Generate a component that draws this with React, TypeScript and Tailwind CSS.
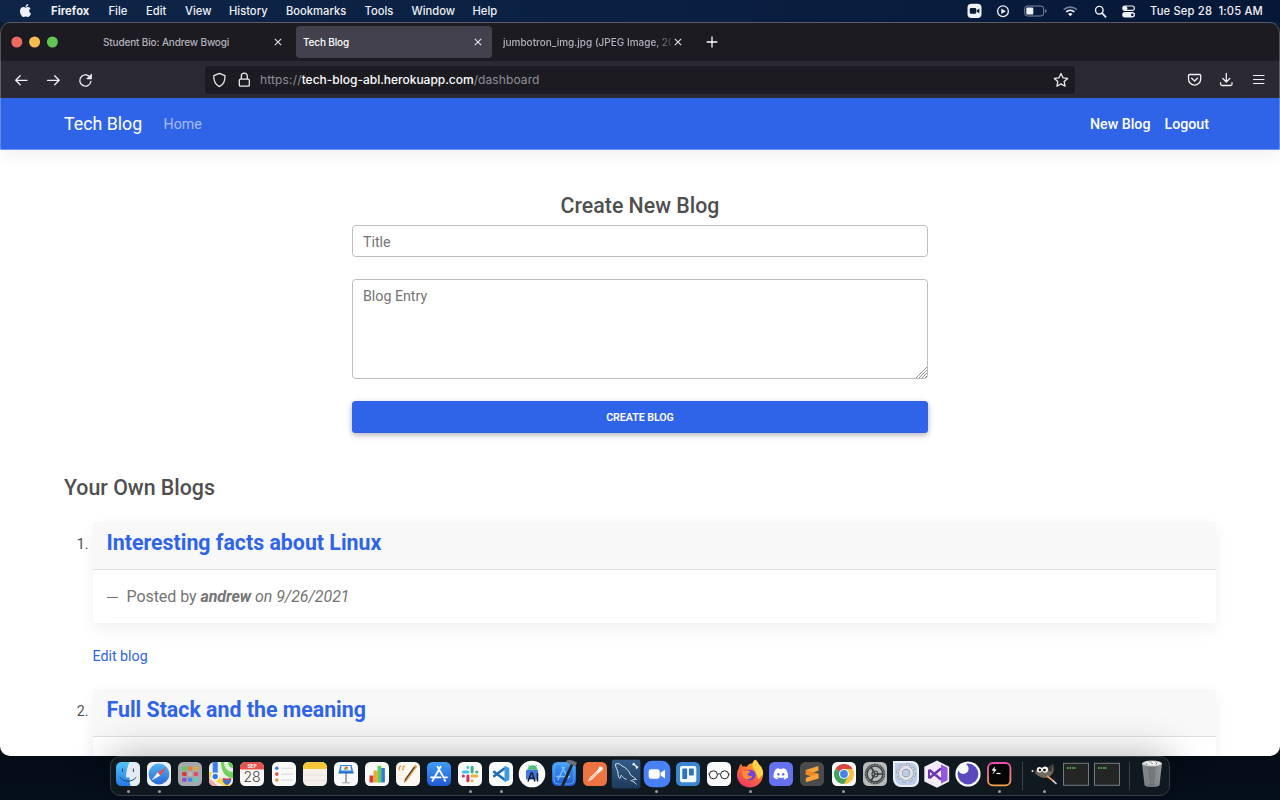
import type { ReactNode } from "react";
import { FaApple, FaDiscord } from "react-icons/fa";

const menuItems = [
  { label: "Firefox", cls: "w-[57.5px] font-bold tracking-[0.08px]" },
  { label: "File", cls: "w-[37.5px] font-medium" },
  { label: "Edit", cls: "w-[39px] font-medium" },
  { label: "View", cls: "w-[44px] font-medium" },
  { label: "History", cls: "w-[57px] font-medium" },
  { label: "Bookmarks", cls: "w-[78.5px] font-medium" },
  { label: "Tools", cls: "w-[47px] font-medium" },
  { label: "Window", cls: "w-[61px] font-medium" },
  { label: "Help", cls: "w-[40px] font-medium" },
];

function MenuBar() {
  return (
    <div className="flex h-[22px] shrink-0 items-center pb-px pl-[18px] text-[11.2px] leading-[20px] whitespace-nowrap text-[#eef1f5]">
      <FaApple className="-mt-px mr-[18px] h-[15px] w-[15px]" />
      {menuItems.map((m) => (
        <span key={m.label} className={m.cls}>{m.label}</span>
      ))}
      <svg className="ml-auto h-[16px] w-[190px] shrink-0" viewBox="0 0 190 16" fill="none" stroke="#eef1f5">
        <rect x="7.5" y=".8" width="14" height="14.2" rx="4" fill="#eef1f5" stroke="none" />
        <rect x="9.8" y="5" width="6.4" height="5.8" rx="1.2" fill="#0a1c3c" stroke="none" />
        <path d="M16.6 7.4l2.7-1.9v4.8l-2.7-1.9z" fill="#0a1c3c" stroke="none" />
        <circle cx="43" cy="8.2" r="5.4" strokeWidth="1.3" />
        <path d="M41.3 5.5v5.4l4.5-2.7z" fill="#eef1f5" stroke="none" />
        <rect x="64.7" y="3" width="19" height="10" rx="2.8" stroke="#7f8b9f" strokeWidth="1" />
        <rect x="66.3" y="4.6" width="7" height="6.8" rx="1" fill="#eef1f5" stroke="none" />
        <path d="M85.3 6.2c1.8.7 1.8 3 0 3.6z" fill="#8b96a8" stroke="none" />
        <path d="M103.7 6.6a10 10 0 0 1 13.2 0" stroke="#71809a" strokeWidth="1.7" />
        <path d="M106.2 8.9a6.3 6.3 0 0 1 8.2 0" strokeWidth="1.7" />
        <path d="M110.3 13.3l-2.2-2.4a3.4 3.4 0 0 1 4.4 0z" fill="#eef1f5" stroke="none" />
        <circle cx="139.3" cy="7.2" r="3.8" strokeWidth="1.4" />
        <path d="M142.1 10.1l3.5 3.7" strokeWidth="1.7" strokeLinecap="round" />
        <rect x="162.8" y="3" width="11.6" height="4.4" rx="2.2" strokeWidth="1.1" />
        <circle cx="165.1" cy="5.2" r="2.3" fill="#eef1f5" stroke="none" />
        <rect x="162.2" y="9.1" width="12.8" height="5.4" rx="2.7" fill="#eef1f5" stroke="none" />
        <circle cx="172.3" cy="11.8" r="1.4" fill="#0a1c3c" stroke="none" />
      </svg>
      <span className="w-[130px] font-medium tracking-[0.17px] whitespace-pre">Tue Sep 28  1:05 AM</span>
    </div>
  );
}

function Cross() {
  return (
    <svg className="h-[8px] w-[8px] shrink-0" viewBox="0 0 8 8" fill="none" stroke="#e2e2e6" strokeWidth="1.1">
      <path d="M.8 .8l6.4 6.4M7.2 .8L.8 7.2" />
    </svg>
  );
}

function TabBar() {
  return (
    <div className="flex h-[38px] shrink-0 items-center bg-[#1c1b22] text-[10px] leading-[32px] font-medium whitespace-nowrap">
      <svg className="h-[12px] w-[62px] shrink-0" viewBox="0 0 62 12">
        <circle cx="16.8" cy="6" r="5.5" fill="#ed6a5e" />
        <circle cx="34.6" cy="6" r="5.5" fill="#f5bf4f" />
        <circle cx="52.4" cy="6" r="5.5" fill="#61c554" />
      </svg>
      <div className="flex h-[32px] w-[234px] items-center pl-[41px] text-[#b3b2b9]">
        <span className="w-[171px] tracking-[-0.15px]">Student Bio: Andrew Bwogi</span>
        <Cross />
      </div>
      <div className="flex h-[32px] w-[196px] items-center rounded-[4px] bg-[#42414d] pl-[7px] text-white">
        <span className="w-[171px] tracking-[-0.15px]">Tech Blog</span>
        <Cross />
      </div>
      <div className="flex h-[32px] w-[200px] items-center pl-[11px] text-[#b3b2b9]">
        <span className="w-[168px] overflow-hidden [mask-image:linear-gradient(to_right,black_150px,transparent_174px)]">
          jumbotron_img.jpg (JPEG Image, 2048
        </span>
        <span className="ml-[3px] flex"><Cross /></span>
      </div>
      <svg className="ml-[14px] h-[12px] w-[12px]" viewBox="0 0 12 12" stroke="#fbfbfe" strokeWidth="1.3">
        <path d="M6 .6v10.8M.6 6h10.8" />
      </svg>
    </div>
  );
}

function Toolbar() {
  return (
    <div className="flex h-[37px] shrink-0 items-center bg-[#2b2a33]">
      <svg className="h-[20px] w-[205px] shrink-0" viewBox="0 0 205 20" fill="none" stroke="#f0f0f4" strokeWidth="1.3" strokeLinecap="round" strokeLinejoin="round">
        <path d="M27 10.3H15.8M20.200 5.800l-4.500 4.500 4.500 4.500" />
        <path d="M47.500 10.300h11.500M54.700 5.800l4.500 4.500-4.500 4.500" />
        <path d="M90.400 8A5.600 5.600 0 1 0 90.900 11.500M91.200 4.500v4h-4" />
        <path d="M91.200 5v3.500h-3.500z" fill="#f0f0f4" strokeWidth=".6" />
      </svg>
      <div className="flex h-[28px] w-[870px] items-center rounded-[4px] bg-[#1c1b22] text-[12px] whitespace-nowrap text-[#8f8f98]">
        <svg className="h-[18px] w-[55px] shrink-0" viewBox="0 0 55 18" fill="none" stroke="#e9e9ed" strokeWidth="1.300" strokeLinejoin="round">
          <path d="M14.400 2.400l5.600 2.200c.300 5.600-1.300 8.900-5.600 11-4.300-2.100-5.900-5.400-5.600-11z" />
          <rect x="34.300" y="8.200" width="10" height="7" rx="1.200" />
          <path d="M36.300 8V5.200a3 3 0 0 1 6 0V8" />
        </svg>
        <span className="tracking-[0.15px]">https://</span>
        <span className="font-medium tracking-[-0.010px] text-[#fbfbfe]">tech-blog-abl.herokuapp.com</span>
        <span className="tracking-[0.1px]">/dashboard</span>
        <svg className="mr-[6.500px] ml-auto h-[16px] w-[16px]" viewBox="0 0 16 16" fill="none" stroke="#e9e9ed" strokeWidth="1.300" strokeLinejoin="round">
          <path d="M8 1.500l2 4.300 4.700.600-3.500 3.200.900 4.600L8 11.900l-4.100 2.300.900-4.600L1.300 6.400 6 5.800z" />
        </svg>
      </div>
      <svg className="ml-auto h-[20px] w-[96px]" viewBox="0 0 96 20" fill="none" stroke="#f0f0f4" strokeWidth="1.300" strokeLinecap="round" strokeLinejoin="round">
        <path d="M5.500 4.500h10.200c.600 0 1 .400 1 1V9a6.100 6.100 0 0 1-12.200 0V5.500c0-.600.400-1 1-1zM7.700 8.200l2.900 2.800 2.900-2.800" />
        <path d="M42.300 3.500v8.400M38.800 8.500l3.500 3.500 3.500-3.500M36.600 12.700V14c0 .900.600 1.500 1.500 1.500h8.400c.900 0 1.500-.600 1.500-1.500v-1.300" />
        <path d="M69.500 5.500H80M69.500 9.500H80M69.500 13.500H80" strokeWidth="1.200" />
      </svg>
    </div>
  );
}

function BlogItem({ index, title, first }: { index: number; title: string; first?: boolean }) {
  return (
    <li className="flex">
      <span className="w-[28.500px] pt-[13px] pr-[4px] text-right text-[14.220px] leading-[18px]">{index}.</span>
      <div className="flex-1">
        <article className="rounded-[3.500px] bg-white shadow-[0_9px_18px_rgba(0,0,0,0.040),0_2px_14px_rgba(0,0,0,0.030)]">
          <h4 className="h-[48px] border-b border-[#dfdfdf] bg-[#f8f8f8] pl-[14px] text-[21.330px] leading-[41px] font-bold text-[#2f64e9]">{title}</h4>
          <p className="flex h-[53px] items-center pt-px pl-[14px] text-[16px] text-[#757575]">
            <span className="w-[20px]"><span className="inline-block w-[11px] border-t border-[#757575] align-middle" /></span>
            <span className="tracking-[-0.060px]">Posted by <i><b>andrew</b> on 9/26/2021</i></span>
          </p>
        </article>
        {first && <a className="mt-[24px] mb-[23px] block h-[18.500px] text-[14.220px] leading-[18px] text-[#2f64e9]">Edit blog</a>}
      </div>
    </li>
  );
}

function Page() {
  return (
    <div className="flex min-h-0 flex-1 flex-col overflow-hidden bg-white font-['Roboto',sans-serif] text-[#4f4f4f]">
      <nav className="flex h-[52px] shrink-0 items-center border-b border-[#6d93f2] bg-[#2f64e9] px-[64px] pt-[2px] text-[14.220px] text-white shadow-[0_3px_18px_rgba(0,0,0,0.080)]">
        <span className="w-[99.500px] text-[17.780px]">Tech Blog</span>
        <span className="text-white/55">Home</span>
        <span className="mr-[14px] ml-auto font-medium">New Blog</span>
        <span className="mr-[7px] font-medium">Logout</span>
      </nav>
      <form className="mx-auto mt-[43px] flex w-[576px] shrink-0 flex-col text-[14.220px]">
        <h4 className="mb-[6px] text-center text-[21.330px] leading-[26px] font-medium">Create New Blog</h4>
        <input placeholder="Title" className="h-[32px] rounded-[3.500px] border border-[#bdbdbd] px-[10px] pt-[2px] placeholder:text-[#757575]" />
        <div className="relative mt-[22px] h-[100px]">
          <textarea placeholder="Blog Entry" className="block h-full w-full resize-none rounded-[3.500px] border border-[#bdbdbd] px-[10px] py-[5px] leading-[22.700px] placeholder:text-[#757575]" />
          <svg className="absolute right-px bottom-px h-[11px] w-[11px]" viewBox="0 0 11 11" stroke="#777" strokeWidth=".8">
            <path d="M0 11L11 0M3 11l8-8M6 11l5-5M9 11l2-2" />
          </svg>
        </div>
        <button type="button" className="mt-[22px] h-[32px] rounded-[3.500px] bg-[#2f64e9] pt-[2px] text-[10.670px] font-semibold tracking-[-0.050px] text-white shadow-[0_2px_5px_rgba(0,0,0,0.200),0_2px_9px_rgba(0,0,0,0.120)]">
          CREATE BLOG
        </button>
      </form>
      <section className="mt-[42px] shrink-0 px-[64px]">
        <h4 className="mb-[21px] text-[21.330px] leading-[26px] font-medium">Your Own Blogs</h4>
        <ol>
          <BlogItem index={1} title="Interesting facts about Linux" first />
          <BlogItem index={2} title="Full Stack and the meaning" />
        </ol>
      </section>
    </div>
  );
}

function Tile({ fill, children }: { fill: string; children?: ReactNode }) {
  return (
    <>
      <rect x="0" y="0" width="24" height="24" rx="5.300" fill={fill} />
      {children}
    </>
  );
}

type DockApp = { name: string; running?: boolean; art: ReactNode };

const apps: DockApp[] = [
  {
    name: "finder",
    running: true,
    art: (
      <Tile fill="url(#finder)">
        <path d="M13.500 0h5.200A5.300 5.300 0 0 1 24 5.300v13.400a5.300 5.300 0 0 1-5.300 5.300h-4.200c-.700-2.500-.900-5-.900-8.500H9.900C10.300 9.300 11.500 4 13.500 0z" fill="#e6ebf2" />
        <path d="M6.600 7v2.600M17.400 7v2.600M4 15.500c4 5 12 5 16 0" fill="none" stroke="#23405f" strokeWidth="1" strokeLinecap="round" />
      </Tile>
    ),
  },
  {
    name: "safari",
    running: true,
    art: (
      <Tile fill="#eeeeef">
        <circle cx="12" cy="12" r="10.400" fill="url(#safari)" />
        <path d="M19.500 5.500l-6.200 7.900-2.700-2.800z" fill="#e8503f" />
        <path d="M4.500 18.500l6.100-7.900 2.700 2.800z" fill="#f4f4f4" />
      </Tile>
    ),
  },
  {
    name: "launchpad",
    art: (
      <Tile fill="#a5a8ad">
        {["#59d14d", "#f07a3a", "#e8a33c", "#d93831", "#b6b8be", "#e24a68", "#9a47cc", "#3b8de8", "#6bcab8"].map((c, i) => (
          <rect key={c} x={4.200 + (i % 3) * 5.700} y={4.400 + Math.floor(i / 3) * 5.700} width="4.400" height="4" rx="1.100" fill={c} />
        ))}
      </Tile>
    ),
  },
  {
    name: "maps",
    art: (
      <g clipPath="url(#squircle)">
        <rect width="24" height="24" fill="#f2efe5" />
        <path d="M12 0h12v16C16 16 12 9 12 0z" fill="#72d15e" />
        <path d="M15 0h9v10c-5 0-9-4-9-10z" fill="#e9ede2" />
        <path d="M19 0h5v6c-3 0-5-3-5-6z" fill="#64c955" />
        <path d="M0 9l24 15H15L0 15z" fill="#f8d74e" />
        <path d="M0 16l9 8H0z" fill="#f0a8b0" />
        <rect x="3.700" y="0" width="5" height="15" fill="#3980ee" />
        <circle cx="6.200" cy="14.500" r="4" fill="#fff" />
        <circle cx="6.200" cy="14.500" r="2.700" fill="#2f7bea" />
        <path d="M14 16c2.500 1 5.500 1 8 0 1 3-.500 5.500-4 7-3.500-1.500-5-4-4-7z" fill="#4372c8" />
        <path d="M14 16c2.500 1 5.500 1 8 0l.2 2h-8.400z" fill="#dc4444" />
      </g>
    ),
  },
  {
    name: "calendar",
    art: (
      <Tile fill="#f8f7f6">
        <path d="M0 7.600V5.300A5.300 5.300 0 0 1 5.300 0h13.400A5.300 5.300 0 0 1 24 5.300v2.300z" fill="#e5544c" />
        <text x="12" y="6" textAnchor="middle" fontSize="4.800" fontWeight="700" fill="#fff">SEP</text>
        <text x="12" y="20.400" textAnchor="middle" fontSize="14" fontWeight="300" fill="#3c3c3c">28</text>
      </Tile>
    ),
  },
  {
    name: "reminders",
    art: (
      <Tile fill="#fafafa">
        {["#3d78e6", "#de4d48", "#e09243"].map((c, i) => (
          <g key={c}>
            <circle cx="4.800" cy={6.200 + i * 5.900} r="1.800" fill={c} />
            <path d={i === 0 ? "M9 6.200h12" : i === 1 ? "M9 12.100h12" : "M9 18h12"} stroke="#c9c9c9" strokeWidth=".7" />
          </g>
        ))}
      </Tile>
    ),
  },
  {
    name: "notes",
    art: (
      <Tile fill="#f3f1ea">
        <path d="M0 7V5.300A5.300 5.300 0 0 1 5.300 0h13.400A5.300 5.300 0 0 1 24 5.300V7z" fill="#f6c737" />
        <path d="M1 13h22M1 18.500h22" stroke="#dddbd3" strokeWidth=".6" />
      </Tile>
    ),
  },
  {
    name: "keynote",
    art: (
      <Tile fill="#f8f9fb">
        <path d="M11.300 11h1.400v9.500h-1.400z" fill="#7d828c" />
        <path d="M8 20.300h8v1H8z" fill="#9ba0a8" />
        <path d="M6.400 3h11.200L19.500 11h-15z" fill="#3686e4" />
        <path d="M7.500 4h9l.7 4.500H6.800z" fill="#e6f1fb" />
        <circle cx="12" cy="6.300" r="1.800" fill="#e8a03c" />
        <path d="M12 4.500a1.800 1.800 0 0 1 1.800 1.800H12z" fill="#de4c43" />
        <path d="M12 8.100a1.800 1.800 0 0 1-1.800-1.800H12z" fill="#47b05c" />
        <path d="M4.500 10.200h15v1.300h-15z" fill="#2366b8" />
      </Tile>
    ),
  },
  {
    name: "numbers",
    art: (
      <Tile fill="#f8faf7">
        <rect x="4.500" y="13.500" width="4" height="7" fill="#d93a33" />
        <rect x="8.500" y="8.500" width="4" height="12" fill="#f0a735" />
        <rect x="12.500" y="3.800" width="3.700" height="16.700" fill="#5fce58" />
        <rect x="16.200" y="6" width="3.700" height="14.500" fill="#3378dc" />
      </Tile>
    ),
  },
  {
    name: "pages",
    art: (
      <Tile fill="#fbf8f2">
        <path d="M3 9.300l6 0M3 13h8M3 16.500h6" stroke="#e6dfd3" strokeWidth=".5" />
        <path d="M3.200 8.300V5.800c0-1 .8-1.600 2-1.800M7 8.300V5.800c0-1 .8-1.600 2-1.800" fill="none" stroke="#efa04f" strokeWidth="1.500" />
        <path d="M8 21l1-4L19.300 2.800l2 1.500L11 18.500z" fill="#e5953a" />
        <path d="M8 21l1-4 9-12.500 1 .7L9.600 18.200z" fill="#46413c" />
      </Tile>
    ),
  },
  {
    name: "app-store",
    art: (
      <Tile fill="url(#store)">
        <path d="M13.600 4.800L6.400 17.200M10.500 4.800l6.200 10.700M4 15.300h9.600M17 15.300h3M17.300 17.500l.9 1.500M5.800 18.300l-.4.700" stroke="#fff" strokeWidth="1.800" strokeLinecap="round" />
      </Tile>
    ),
  },
  {
    name: "slack",
    running: true,
    art: (
      <Tile fill="#fbfbfb">
        <g strokeWidth="3" strokeLinecap="round">
          <path d="M9.900 5.300v.1M5.300 9.900h4.600" stroke="#4ec0e8" />
          <path d="M14.100 5.300v4.600M18.700 9.900h.1" stroke="#3fb17e" />
          <path d="M14.100 14.100h4.600M14.100 18.700v.1" stroke="#e5b13c" />
          <path d="M9.900 14.100v4.600M5.300 14.100h.1" stroke="#d42f5f" />
        </g>
      </Tile>
    ),
  },
  {
    name: "vscode",
    running: true,
    art: (
      <Tile fill="#fbfbfb">
        <path d="M4.300 9.300L16 18M4.300 14.700L16 6" stroke="#1d6fb4" strokeWidth="2.600" strokeLinejoin="round" />
        <path d="M15.500 3.800L20.300 6v12l-4.800 2.200z" fill="#3c9ae4" />
      </Tile>
    ),
  },
  {
    name: "android-studio",
    art: (
      <>
        <circle cx="12" cy="12" r="13.300" fill="#fbfbfb" />
        <path d="M7.500 7.700a5 4.500 0 0 1 10 0z" fill="#4cc276" />
        <path d="M9.500 4.500L8.400 3M15.500 4.500L16.600 3" stroke="#4cc276" />
        <rect x="6" y="7.700" width="12" height="9.800" rx="1" fill="#4278da" />
        <path d="M8 19.500l3.200-8.500h1L15 19.500M9.500 16.200h4.300M17.500 11v8.500" fill="none" stroke="#15233d" strokeWidth="1.500" />
      </>
    ),
  },
  {
    name: "xcode",
    art: (
      <Tile fill="url(#store)">
        <rect x="2" y="2" width="20" height="20" rx="4" fill="none" stroke="#74bdf3" strokeWidth=".7" />
        <path d="M12.500 5L6 17.500M10 5l6 11M4.500 14.500h13" stroke="#7fc0f5" strokeWidth="1.500" strokeLinecap="round" />
        <path d="M8.500 24.500L19 1.500l2.500 1L11.500 25z" fill="#20242b" />
        <path d="M14-1c3-2 8-.5 11 1.800l-2 3.800-2.500-1.600c-1.500-1-3-1.500-4.500-1z" fill="#69727c" />
      </Tile>
    ),
  },
  {
    name: "postman",
    art: (
      <Tile fill="#ee7342">
        <path d="M5 19.500l1.300-3.600 7.500-6.800 2 2L9 17.500z" fill="#fde9df" />
        <path d="M13.500 9l3-3 2.300 2.300-3.300 2.900z" fill="#fff4ec" />
        <circle cx="17.700" cy="6.600" r="2.200" fill="#fff2e9" />
        <path d="M7 17l7.500-6.500" stroke="#ee7342" strokeWidth=".6" />
      </Tile>
    ),
  },
  {
    name: "mysql-workbench",
    art: (
      <>
        <rect x="-2.200" y="-2.200" width="28.600" height="28.600" rx="2" fill="url(#mysql)" />
        <path d="M1.500 2c3-1 5 0 6.500 2 4 1.500 7 4.500 8.500 9 2 1.300 3.500 2.500 6 4.500-2 .2-3 0-4.200.6M22.500 22.500c-1.500-2-3.500-3.500-6-4M1.500 2c-.3 3.500 2.400 6 2.500 9 0 2.500.4 4 1.800 5.500 1.100-1 .4-2.600 1.500-3.300 1.500 2 3 3.500 5.200 4.300" fill="none" stroke="#e4edf5" strokeWidth=".9" />
        <path d="M19 1.500l4.500 4M18.500 3l2-2M22 6.500l2-2" stroke="#eef3f7" strokeWidth="1.600" />
      </>
    ),
  },
  {
    name: "zoom",
    running: true,
    art: (
      <>
        <rect x="-1.300" y="-1.300" width="26.600" height="26.600" rx="8.500" fill="#4a80f5" />
        <rect x="3.700" y="7.300" width="11" height="9.500" rx="2.300" fill="#fff" />
        <path d="M15.500 10.700l4.500-3v8.700l-4.500-3z" fill="#fff" />
      </>
    ),
  },
  {
    name: "trello",
    art: (
      <Tile fill="#3b87cf">
        <rect x="4" y="4" width="16.300" height="16.300" rx="2" fill="#f3f6fa" />
        <rect x="6.300" y="6.400" width="4.800" height="10.500" rx=".7" fill="#2d72bd" />
        <rect x="13" y="6.400" width="4.800" height="7" rx=".7" fill="#2d72bd" />
      </Tile>
    ),
  },
  {
    name: "glasses",
    art: (
      <Tile fill="#fcfcfc">
        <g fill="none" stroke="#222" strokeWidth="1">
          <circle cx="6.400" cy="12.800" r="4" />
          <circle cx="17.600" cy="12.800" r="4" />
          <path d="M10.400 12.500c.8-1 2.400-1 3.200 0M1.300 12h1.200M21.500 12h1.200" />
        </g>
      </Tile>
    ),
  },
  {
    name: "firefox",
    running: true,
    art: (
      <>
        <path d="M17-2.300c2.500 1.500 3.200 3 3.500 4.300 3.200 2.200 5 6 4.500 11-.600 7.500-6 12.500-13 12.500S-1 20-1 13.500c0-3.500.5-5 1.800-7C1 4.500 2 2.800 3.500 1.700c0 1.200.3 2 .8 2.700 1.700-.4 3-.3 4.500.4C10.500 1.800 13 1.500 14.500 1.600 14.600 0 15.400-1.400 17-2.300z" fill="url(#fox)" />
        <path d="M17-2.300c2.500 1.500 3.200 3 3.500 4.300 3 2.700 4.800 6.500 4.500 10.200l-4.500 5-3-7.500c-2.300-3.500-3.500-5.700-3-8.100z" fill="#ffd24a" />
        <circle cx="12.300" cy="13" r="5.300" fill="#7344d6" />
        <path d="M4 8.500c3 .8 4.600.4 7.800.5 1 .8-.3 2-2.300 2.400.4 2.500 2.200 3 5 2.300-1.600 4-7 4.500-9.500 1z" fill="#ff8d32" />
      </>
    ),
  },
  {
    name: "discord",
    art: (
      <Tile fill="#6571ee">
        <FaDiscord x="3.800" y="3.800" width="16.500" height="16.500" color="#fff" />
      </Tile>
    ),
  },
  {
    name: "sublime",
    art: (
      <Tile fill="#4b4b4b">
        <path d="M5.800 8l12.600-4v4.800L5.800 12.800z" fill="#f9a33b" />
        <path d="M5.800 8v4.800l12.600 3.600v-4.700z" fill="#ee8a25" />
        <path d="M5.800 15.800l12.600-4v4.600L5.800 20.300z" fill="#fba43a" />
      </Tile>
    ),
  },
  {
    name: "chrome",
    running: true,
    art: (
      <Tile fill="#fafafa">
        <path d="M12 12L3.400 7a9.900 9.900 0 0 1 17.200 0z" fill="#d9483c" />
        <path d="M12 12V7h8.600A9.900 9.900 0 0 1 11.600 22z" fill="#f6c445" />
        <path d="M3.400 7A9.900 9.900 0 0 0 11.800 22l4.400-7.600L12 12z" fill="#42a35b" />
        <circle cx="12" cy="12" r="5" fill="#fff" />
        <circle cx="12" cy="12" r="3.900" fill="#4584ee" />
      </Tile>
    ),
  },
  {
    name: "system-preferences",
    art: (
      <Tile fill="#b6bab9">
        <g fill="none" stroke="#3c3f42">
          <circle cx="12" cy="12" r="9.500" strokeWidth="1.500" strokeDasharray="1.200 .4" />
          <circle cx="12" cy="12" r="7.900" strokeWidth="1.500" />
          <circle cx="12" cy="12" r="3" strokeWidth="1.200" />
          <path d="M12 12h8M12 12L8 19M12 12L8 5" strokeWidth="1.600" />
        </g>
      </Tile>
    ),
  },
  {
    name: "automation",
    art: (
      <>
        <path d="M-1-1h19a7 7 0 0 1 7 7v12a7 7 0 0 1-7 7H7a8 8 0 0 1-8-8z" fill="#e9eef6" />
        <path d="M1 1h16a6 6 0 0 1 6 6v10a6 6 0 0 1-6 6H8a7 7 0 0 1-7-7z" fill="#bccce6" />
        <circle cx="12" cy="11" r="8" fill="none" stroke="#858b95" strokeWidth="3.400" strokeDasharray="3.100 3.183" />
        <circle cx="12" cy="11" r="8" fill="none" stroke="#d7dae0" strokeWidth="2.400" strokeDasharray="2.500 3.783" strokeDashoffset="-.3" />
        <circle cx="12" cy="11" r="5.600" fill="none" stroke="#858b95" strokeWidth="4" />
        <circle cx="12" cy="11" r="5.700" fill="none" stroke="#e2e4e9" strokeWidth="3" />
      </>
    ),
  },
  {
    name: "visual-studio",
    art: (
      <>
        <path d="M12-1.500l12.200 6.300v14.700L12 25.700-.700 19.500V4.800z" fill="#f2ecfa" />
        <path d="M16 2.500l6.500 3.300v12.400L16 21.500z" fill="#9558da" />
        <path d="M4.500 8L16 17.500M4.500 16L16 6.500" stroke="#6b35b0" strokeWidth="2.400" />
        <path d="M4 7.500v9" stroke="#6b35b0" strokeWidth="2" />
      </>
    ),
  },
  {
    name: "insomnia",
    art: (
      <>
        <circle cx="12" cy="12" r="12.600" fill="#fafafa" />
        <circle cx="12" cy="12" r="10.400" fill="#5849be" />
        <circle cx="7.300" cy="6.600" r="5.300" fill="#fafafa" />
      </>
    ),
  },
  {
    name: "hyper",
    running: true,
    art: (
      <>
        <rect x="1" y="1" width="22.400" height="22.400" rx="5" fill="#050505" stroke="url(#hyper)" strokeWidth="1.800" />
        <path d="M7.600 5L5 8.200l2.300.6-1.500 3 3.500-4-2-.6z" fill="#fff" stroke="#fff" strokeWidth=".4" />
        <path d="M9.500 11.500h4" stroke="#fff" strokeWidth="1.200" />
      </>
    ),
  },
];

const gimp: DockApp = {
  name: "gimp",
  running: true,
  art: (
    <>
      <path d="M2 9c4-1 8-2 12-2l7-5c1 5 1 9-2 11-3 5-12 3-15-1z" fill="#70685b" />
      <path d="M13.500 7L21 2l-1.500 8z" fill="#3b362e" />
      <circle cx="1.500" cy="9.800" r="2.200" fill="#22221f" />
      <circle cx=".500" cy="9" r="1" fill="#e5e5e5" />
      <circle cx="7.500" cy="7.800" r="2.700" fill="#f4f4f2" />
      <circle cx="13" cy="7.600" r="3.100" fill="#f4f4f2" />
      <circle cx="7.900" cy="8" r="1.200" fill="#111" />
      <circle cx="12.500" cy="8.100" r="1.400" fill="#111" />
      <path d="M15 14l7 5.500" stroke="#e39a62" strokeWidth="1.800" />
      <path d="M21 18.800l3.500 3.200" stroke="#dfe6ec" strokeWidth="1.500" />
    </>
  ),
};

function terminalWindow(name: string): DockApp {
  return {
    name,
    art: (
      <>
        <rect x="-.500" y="1.300" width="25" height="22" fill="#242625" stroke="#747a7f" strokeWidth="1" />
        <path d="M3 6h2M5.600 6h2M8.200 6h3.200" stroke="#49a84b" strokeWidth="1.900" strokeDasharray="1.500 .4" />
      </>
    ),
  };
}

const trash: DockApp = {
  name: "trash",
  art: (
    <>
      <path d="M2 1h20l-2.500 22c-.300 2.700-14.700 2.700-15 0z" fill="url(#trash)" />
      <ellipse cx="12" cy="1.500" rx="10" ry="3" fill="#c9cccd" />
      <path d="M4 1l3-2 3 2.500L13-1l3 2.300L19-.500l1.500 2.200-5 1.500H8z" fill="#f3f3f3" />
      <path d="M6 1.500l1.500 1M11.500 .500l1 1.500M17 .800l-1 1.500" stroke="#6a7375" strokeWidth="1" />
      <path d="M7 7l1.500 15M12 7v15M17 7l-1.500 15" stroke="#c2c6c8" strokeWidth=".5" opacity=".5" />
    </>
  ),
};

function DockIcon({ app }: { app: DockApp }) {
  return (
    <div className="flex w-[31.120px] shrink-0 flex-col items-center pt-[5px]">
      <svg className="h-[24px] w-[24px] overflow-visible" viewBox="0 0 24 24">{app.art}</svg>
      {app.running && <span className="mt-[4px] h-[3px] w-[3px] rounded-full bg-[#999da1]" />}
    </div>
  );
}

function Dock() {
  return (
    <div className="relative mx-auto flex h-[39.500px] w-[1060px] rounded-[10px] border border-[#363d43] bg-[#111920] pl-[1.500px] shadow-[0_0_40px_rgba(0,0,0,0.320)]">
      <svg className="absolute h-0 w-0">
        <defs>
          <clipPath id="squircle"><rect width="24" height="24" rx="5.300" /></clipPath>
          <linearGradient id="finder" x2="0" y2="1"><stop stopColor="#55c3f7" /><stop offset="1" stopColor="#2579e4" /></linearGradient>
          <linearGradient id="safari" x2="0" y2="1"><stop stopColor="#55b2f2" /><stop offset="1" stopColor="#2c69d5" /></linearGradient>
          <linearGradient id="store" x2="0" y2="1"><stop stopColor="#409df4" /><stop offset="1" stopColor="#215ad5" /></linearGradient>
          <linearGradient id="mysql" x2="0" y2="1"><stop stopColor="#335d87" /><stop offset="1" stopColor="#1d3a5b" /></linearGradient>
          <linearGradient id="fox" x1=".8" x2=".2" y2="1"><stop stopColor="#ffc43b" /><stop offset=".5" stopColor="#fb6c38" /><stop offset="1" stopColor="#e8336a" /></linearGradient>
          <linearGradient id="hyper" x2="0" y2="1"><stop stopColor="#ec4bb0" /><stop offset="1" stopColor="#f4a548" /></linearGradient>
          <linearGradient id="trash"><stop stopColor="#8a8e90" /><stop offset=".5" stopColor="#6c7072" /><stop offset="1" stopColor="#9a9d9f" /></linearGradient>
        </defs>
      </svg>
      {apps.map((a) => <DockIcon key={a.name} app={a} />)}
      <span className="mt-[5px] ml-[7px] h-[28px] w-px bg-[#3a4147]" />
      <span className="w-[6px]" />
      <DockIcon app={gimp} />
      <span className="w-px" />
      <DockIcon app={terminalWindow("terminal-1")} />
      <DockIcon app={terminalWindow("terminal-2")} />
      <span className="mt-[5px] ml-[6px] h-[28px] w-px bg-[#3a4147]" />
      <span className="w-[6px]" />
      <DockIcon app={trash} />
    </div>
  );
}

export default function App() {
  return (
    <div className="flex h-[800px] w-[1280px] flex-col overflow-hidden bg-[linear-gradient(#0c2344,#071a3a_30px,#02060d_700px,#05101d)] font-['Inter',sans-serif]">
      <div className="bg-[linear-gradient(to_right,#0e2547,#0a2042_50%,#061737)]">
        <MenuBar />
      </div>
      <div className="relative flex h-[734px] shrink-0 flex-col overflow-hidden rounded-[10px] border-t border-[#5d5c62] bg-[#1c1b22]">
        <TabBar />
        <Toolbar />
        <Page />
        <div className="pointer-events-none absolute inset-0 rounded-[10px] border-x border-white/25" />
      </div>
      <Dock />
    </div>
  );
}
